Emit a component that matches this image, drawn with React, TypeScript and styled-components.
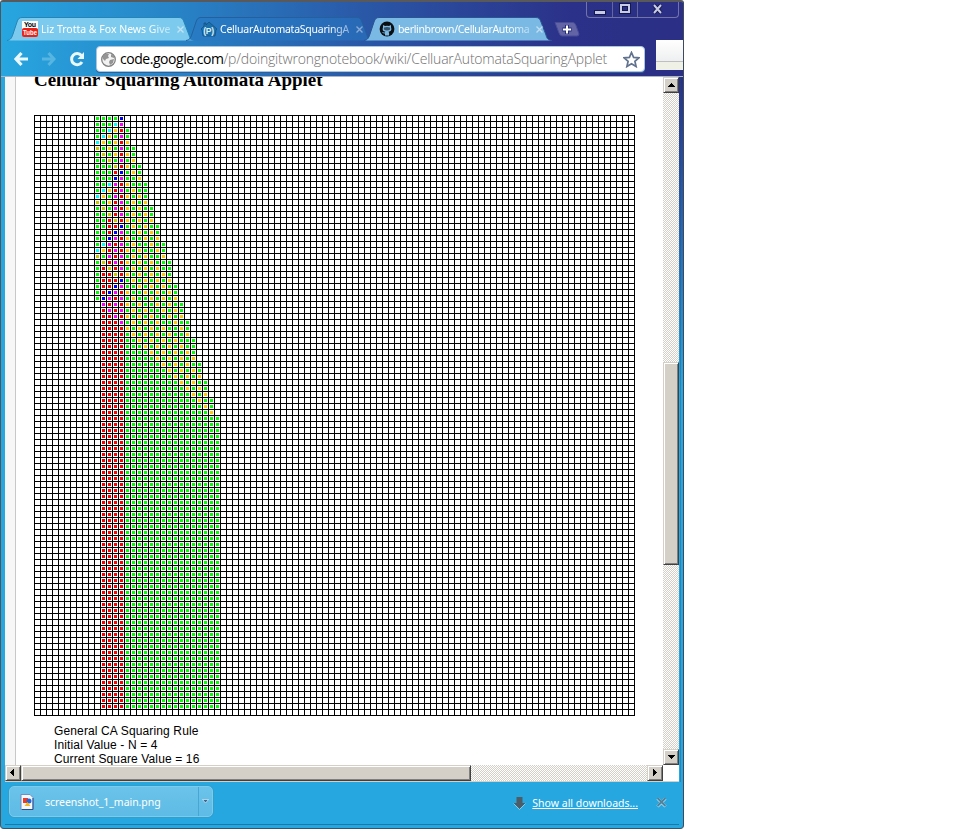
import React from "react";
import styled, { createGlobalStyle } from "styled-components";

const Global = createGlobalStyle`
  * { box-sizing: border-box; }
  body { margin: 0; background: #fff; overflow: hidden; }
`;

const ui = `"Noto Sans", "Open Sans", sans-serif`;

const Window = styled.div`
  position: relative;
  width: 684px;
  height: 829px;
  display: flex;
  flex-direction: column;
  overflow: hidden;
  background: #27a7df;
  border-top: 2px solid #59595b;
  border-left: 1px solid #4c565c;
  border-right: 1px solid #3c4a5c;
  border-bottom: 1px solid #34566a;
  border-radius: 3px 3px 4px 4px;
`;

const Header = styled.header`
  height: 75px;
  flex: none;
  background: linear-gradient(90deg, #27a6df 0, #2880c4 190px, #2a56a6 370px, #2b3188 570px, #2b2f86 100%);
  box-shadow: inset 0 -1px 0 #a9b6c8;
`;

const TitleBar = styled.div`
  display: flex;
  align-items: flex-end;
  height: 39px;
  padding-left: 6px;
`;

const Tab = styled.div<{ $w: number }>`
  position: relative;
  width: ${(p) => p.$w}px;
  height: 24px;
  margin-right: -9px;
  display: flex;
  align-items: center;
  padding: 0 11px 0 15px;
`;

const TabShape = styled.svg`
  position: absolute;
  inset: 0;
`;

const TabIcon = styled.svg`
  position: relative;
  flex: none;
  width: 16px;
  height: 16px;
`;

const TabLabel = styled.span<{ $spacing: number }>`
  position: relative;
  flex: 1;
  margin-left: 3px;
  white-space: nowrap;
  font: 10.5px/16px ${ui};
  letter-spacing: ${(p) => p.$spacing}px;
  color: #fff;
  mask-image: linear-gradient(90deg, #000 calc(100% - 20px), rgba(0, 0, 0, 0.45));
`;

const TabClose = styled.svg`
  position: relative;
  flex: none;
  width: 7px;
  height: 7px;
  margin-left: 7px;
`;

const NewTab = styled.svg`
  width: 26px;
  height: 15px;
  margin: 0 0 4px 11px;
  flex: none;
`;

const Controls = styled.div`
  position: absolute;
  top: -1px;
  right: 4px;
  display: flex;
  width: 93px;
  height: 17px;
  border: 1px solid #7273a8;
  border-top: 0;
  border-radius: 0 0 4px 4px;
`;

const Control = styled.div<{ $w: number }>`
  width: ${(p) => p.$w}px;
  display: flex;
  align-items: center;
  justify-content: center;
  & + & { border-left: 1px solid #6466a0; }
`;

const Toolbar = styled.div`
  display: flex;
  align-items: center;
  height: 36px;
  padding: 0 0 0 12px;
`;

const NavIcon = styled.svg`
  width: 16px;
  height: 16px;
  margin-right: 12px;
  flex: none;
`;

const AddressBar = styled.div`
  display: flex;
  align-items: center;
  width: 549px;
  height: 26px;
  margin-left: -1px;
  padding: 0 4px 0 4px;
  background: #fff;
  border: 1px solid #a8c6df;
  border-radius: 4px;
  box-shadow: 0 1px 0 #2c5f9b;
  svg { flex: none; }
`;

const Url = styled.div`
  flex: 1;
  margin-left: 4px;
  white-space: nowrap;
  font: 300 14px/20px "Open Sans", ${ui};
  color: #707070;
  letter-spacing: -0.2px;
`;

const Host = styled.span`
  color: #000;
  font-weight: 400;
  letter-spacing: -0.46px;
`;

const Notch = styled.div`
  position: absolute;
  top: 38px;
  right: -1px;
  width: 28px;
  height: 30px;
  background: linear-gradient(#fff 0, #eeeff0 21px, #bfbfbf 21px, #bfbfbf 22px, #f0f1e6 22px);
`;

const Body = styled.div`
  display: flex;
  height: 705px;
  flex: none;
  padding-left: 4px;
`;

const View = styled.div`
  width: 674px;
  display: grid;
  grid-template: 688px 17px / 658px 16px;
  background: #fff;
`;

const FrameEdge = styled.div`
  width: 4px;
  background: linear-gradient(90deg, transparent 1px, rgba(20, 80, 130, 0.35) 1px, rgba(20, 80, 130, 0.35) 2px, transparent 2px),
    linear-gradient(#2b2f86 0, #2a62ae 140px, #27a6df 310px);
`;

const Page = styled.main`
  overflow: hidden;
  border-left: 10px solid #f7f7f7;
`;

const Article = styled.article`
  display: flow-root;
  height: 688px;
  border-left: 1px solid #c8c8c8;
  padding-left: 18px;
`;

const Heading = styled.h2`
  margin: -8px 0 24px;
  height: 22px;
  font: bold 19px/22px "Liberation Serif", serif;
  letter-spacing: -0.03px;
  color: #000;
`;

const Grid = styled.svg`
  display: block;
`;

const Notes = styled.div`
  margin: 8px 0 0 20px;
  font: 12px/14px "Liberation Sans", sans-serif;
  letter-spacing: 0.13px;
  color: #000;
`;

const checker = `repeating-conic-gradient(#d4d0c8 0 25%, #fff 0 50%) 0 0 / 2px 2px`;

const VScroll = styled.div`
  display: flex;
  flex-direction: column;
  background: ${checker};
`;

const HScroll = styled.div`
  display: flex;
  background: ${checker};
  border-bottom: 1px solid #d4d0c8;
`;

const Corner = styled.div`
  background: #fff;
  border-bottom: 1px solid #d4d0c8;
`;

const ScrollPart = styled.div<{ $w: number; $h: number }>`
  width: ${(p) => p.$w}px;
  height: ${(p) => p.$h}px;
  flex: none;
  display: flex;
  align-items: center;
  justify-content: center;
  background: #d4d0c8;
  border: 1px solid;
  border-color: #d4d0c8 #404040 #404040 #d4d0c8;
  box-shadow: inset 1px 1px 0 #fff, inset -1px -1px 0 #808080;
`;

const Gap = styled.div<{ $size: number }>`
  flex: 0 0 ${(p) => p.$size}px;
`;

const Shelf = styled.footer`
  display: flex;
  height: 43px;
  margin: 0 4px;
  padding: 4px 0 0 4px;
  border-bottom: 1px solid #1979a7;
`;

const Download = styled.div`
  display: flex;
  align-items: center;
  width: 204px;
  height: 31px;
  padding-left: 9px;
  background: linear-gradient(#6ac3ea, #5ebbe5);
  border: 1px solid #7ccbed;
  border-radius: 5px;
  box-shadow: 0 0 0 1px #319fcc;
`;

const FileName = styled.span`
  flex: 1;
  margin-left: 10px;
  font: 10.5px/16px ${ui};
  letter-spacing: -0.05px;
  color: #fff;
`;

const DownloadMenu = styled.div`
  width: 14px;
  height: 29px;
  display: flex;
  align-items: center;
  justify-content: center;
  border-left: 1px solid #45a7d2;
`;

const ShelfActions = styled.div`
  display: flex;
  align-items: center;
  height: 33px;
  margin-left: auto;
  padding-right: 12px;
`;

const AllDownloads = styled.a`
  margin: 0 18px 0 6px;
  font: 10.5px/16px ${ui};
  letter-spacing: 0;
  color: #fff;
  text-decoration: underline;
  white-space: nowrap;
`;

/* One step of the squaring automaton: (left, centre, right) -> next state. */
function next(l: number, c: number, r: number): number {
  if (l === 0 && r === 3) return 0;
  if (c === 2 && r === 3) return 3;
  if (l === 1 && c === 1 && r === 3) return 4;
  if (c === 1 && r === 4) return 4;
  if ((l === 1 || l === 2) && c === 3) return 5;
  if ((l === 0 || l === 1) && c === 4) return 7 - l;
  if (l === 7 && c === 2 && r === 6) return 3;
  if (l === 7) return 7;
  if (c === 7 && (r === 1 || r === 2)) return r;
  if (c === 5 || c === 6) return 7 - c;
  if ((l === 5 || l === 6) && (c === 1 || c === 2)) return 7 - c;
  if ((l === 5 || l === 6) && c === 0 && r === 0) return 1;
  if (c === 1 || c === 2) return c;
  return 0;
}

const SIZE = 100;
const FIRST = 10;
const STATE_COLORS = ["", "#00ff00", "#ff0000", "#0000ff", "#00ffff", "#ff00ff", "#ffc800", "#c8c800"];

function evolve(steps: number): number[][] {
  let row: number[] = new Array(SIZE).fill(0);
  [1, 1, 1, 1, 3].forEach((v, i) => (row[FIRST + i] = v));
  const rows = [row];
  while (rows.length < steps) {
    const prev = row;
    row = prev.map((c, i) => next(prev[i - 1] ?? 0, c, prev[i + 1] ?? 0));
    rows.push(row);
  }
  return rows;
}

const ROWS = evolve(99);
const LINES = Array.from({ length: SIZE + 1 }, (_, i) => `M${i * 6 + 0.5} 0V601M0 ${i * 6 + 0.5}H601`).join("");

function Automaton() {
  return (
    <Grid width={601} height={601} shapeRendering="crispEdges">
      <path d={LINES} stroke="#000" fill="none" />
      {ROWS.map((row, y) =>
        row.map((s, x) =>
          s ? <rect key={`${x}-${y}`} x={x * 6 + 2} y={y * 6 + 2} width={3} height={3} fill={STATE_COLORS[s]} /> : null
        )
      )}
    </Grid>
  );
}

function BrowserTab({ w, fill, edge, label, spacing, cross, children }: {
  w: number; fill: string; edge: string; label: string; spacing: number; cross: string; children: React.ReactNode;
}) {
  return (
    <Tab $w={w}>
      <TabShape width={w} height={24}>
        <path
          d={`M0 23.5C4 23 5 20 6 17L10 5C11 2 12 .5 15 .5H${w - 16}C${w - 13} .5 ${w - 12} 2 ${w - 11} 5L${w - 6} 18C${w - 5} 22 ${w - 4} 23 ${w} 23.5`}
          fill={fill}
          stroke={edge}
        />
      </TabShape>
      <TabIcon viewBox="0 0 16 16">{children}</TabIcon>
      <TabLabel $spacing={spacing}>{label}</TabLabel>
      <TabClose viewBox="0 0 7 7"><path d="M.5.5l6 6M6.5.5l-6 6" stroke={cross} strokeWidth="1.4" /></TabClose>
    </Tab>
  );
}

function Arrow({ d }: { d: string }) {
  return <svg width={8} height={8} shapeRendering="crispEdges"><path d={d} fill="#000" /></svg>;
}

export default function App() {
  return (
    <>
      <Global />
      <Window>
        <Header>
          <TitleBar>
            <BrowserTab w={188} fill="#7ccbee" edge="#2685b8" label="Liz Trotta & Fox News Give" spacing={0} cross="#c0e3f5">
              <path d="M0 0h16v8H0z" fill="#fff" />
              <rect y="7" width="16" height="9" rx="2" fill="#ec2015" />
              <text x="2" y="6.3" fontFamily="Liberation Sans, sans-serif" fontWeight="bold" fontSize="7" textLength="12">You</text>
              <text x="1" y="14" fontFamily="Liberation Sans, sans-serif" fontWeight="bold" fontSize="7" fill="#fff" textLength="14" lengthAdjust="spacingAndGlyphs">Tube</text>
            </BrowserTab>
            <BrowserTab w={187} fill="rgba(40,120,195,.55)" edge="#23609d" label="CelluarAutomataSquaringA" spacing={-0.24} cross="#86a9d6">
              <path d="M0 8L3 5V2h2v2l3-3 8 7-1 1-1 6H2L1 9z" fill="#1c70aa" stroke="#134c7c" strokeWidth=".7" />
              <text x="2.2" y="12.5" fontFamily="Liberation Sans, sans-serif" fontWeight="bold" fontSize="8.5" fill="#d8effc" textLength="11">(P)</text>
            </BrowserTab>
            <BrowserTab w={188} fill="#79b9e3" edge="#2a5593" label="berlinbrown/CellularAutoma" spacing={-0.35} cross="#bfdcf0">
              <circle cx="8" cy="8" r="7.4" fill="#0b0f12" />
              <path d="M4 4l2 1.1q2-.5 4 0L12 4v2.2c1 3-.3 4.2-2.5 4.5.8 1 .7 2 .6 3.7H6v-2c-2 .5-2-.7-3-1.4 1.2-.2 1.4 1 3 .5 0-.5.1-.6.5-.8C4 10.300 3 9 4 6.200z" fill="#79b9e3" />
              <path d="M5 6.500q3-1 6 0 1 3-3 3t-3-3" fill="#38536a" />
            </BrowserTab>
            <NewTab viewBox="0 0 26 15">
              <path d="M1 .5H19q2 0 3 3L25 12q0 2-2 2H8q-2 0-3-3z" fill="#6264a5" stroke="#494d99" />
              <path d="M13 3v9M8.500 7.500h9" stroke="#252b75" strokeWidth="4" />
              <path d="M13 3.500v8M9 7.500h8" stroke="#fff" strokeWidth="2" />
            </NewTab>
          </TitleBar>
          <Toolbar>
            <NavIcon viewBox="0 0 16 16">
              <path d="M8.500 2L3 8l5.500 6M3.500 8H15" stroke="#e9f7fe" strokeWidth="3.200" fill="none" />
            </NavIcon>
            <NavIcon viewBox="0 0 16 16">
              <path d="M7.500 2L13 8l-5.500 6M12.500 8H1" stroke="#57b5e2" strokeWidth="3" fill="none" />
            </NavIcon>
            <NavIcon viewBox="0 0 16 16">
              <path d="M12.500 4.500A5.600 5.600 0 1 0 13 11" stroke="#e9f7fe" strokeWidth="3" fill="none" />
              <path d="M15 1v7H8.500z" fill="#e9f7fe" />
            </NavIcon>
            <AddressBar>
              <svg width={15} height={15} viewBox="0 0 15 15">
                <circle cx="7.500" cy="7.500" r="6.800" fill="#f2f2f2" stroke="#808080" strokeWidth="1.300" />
                <path d="M2 4l3-2.500 3 .5-1 2 1 2-3 1-1 2-2-2zM9 8l4-1-1 4-3 2-1-3zM10 2l3 2v2l-3-1z" fill="#949494" />
              </svg>
              <Url><Host>code.google.com</Host>/p/doingitwrongnotebook/wiki/CelluarAutomataSquaringApplet</Url>
              <svg width={17} height={17} viewBox="0 0 17 17">
                <path d="M8.500 1.500l2.100 4.900 5.300.4-4 3.500 1.200 5.200-4.600-2.800-4.600 2.800 1.200-5.200-4-3.500 5.300-.4z" fill="#fff" stroke="#62738f" strokeWidth="1.700" />
              </svg>
            </AddressBar>
          </Toolbar>
        </Header>
        <Body>
          <View>
            <Page>
              <Article>
                <Heading>Cellular Squaring Automata Applet</Heading>
                <Automaton />
                <Notes>
                  <div>General CA Squaring Rule</div>
                  <div>Initial Value - N = 4</div>
                  <div>Current Square Value = 16</div>
                </Notes>
              </Article>
            </Page>
            <VScroll>
              <ScrollPart $w={16} $h={16}><Arrow d="M4 2h1v1h1v1h1v1h1v1H1V5h1V4h1V3h1z" /></ScrollPart>
              <Gap $size={269} />
              <ScrollPart $w={16} $h={203} />
              <Gap $size={184} />
              <ScrollPart $w={16} $h={16}><Arrow d="M1 2h7v1H7v1H6v1H5v1H4V5H3V4H2V3H1z" /></ScrollPart>
            </VScroll>
            <HScroll>
              <ScrollPart $w={16} $h={16}><Arrow d="M5 0v7H4V6H3V5H2V4H1V3h1V2h1V1h1V0z" /></ScrollPart>
              <ScrollPart $w={450} $h={16} />
              <Gap $size={176} />
              <ScrollPart $w={16} $h={16}><Arrow d="M2 0h1v1h1v1h1v1h1v1H5v1H4v1H3v1H2z" /></ScrollPart>
            </HScroll>
            <Corner />
          </View>
          <FrameEdge />
        </Body>
        <Shelf>
          <Download>
            <svg width={16} height={16} viewBox="0 0 16 16">
              <path d="M2 .5h9l3 3v12H2z" fill="#f4f8ff" stroke="#6e8fc0" />
              <path d="M14 4v11.500H3" stroke="#2c4d8c" fill="none" />
              <path d="M4 4h5v5H4z" fill="#ee3b23" />
              <circle cx="10" cy="7" r="2.500" fill="#2368da" />
              <path d="M5.500 12l3-4 3 4z" fill="#f6b71b" />
            </svg>
            <FileName>screenshot_1_main.png</FileName>
            <DownloadMenu>
              <svg width={7} height={5}><path d="M.5.5h6L3.500 4z" fill="#3f668f" stroke="#d7effa" strokeWidth=".7" /></svg>
            </DownloadMenu>
          </Download>
          <ShelfActions>
            <svg width={13} height={14} viewBox="0 0 13 14">
              <path d="M3.500 1h6v6h3l-6 6-6-6h3z" fill="#4d5d68" />
              <path d="M.5 7.500l6 6 6-6" stroke="#85cbea" fill="none" />
            </svg>
            <AllDownloads>Show all downloads...</AllDownloads>
            <svg width={11} height={11}>
              <path d="M1.500 1.500l8 8M9.500 1.500l-8 8" stroke="#a3d9f0" strokeWidth="3" />
              <path d="M1.500 1l8 8M9.500 1l-8 8" stroke="#4f819b" strokeWidth="1.800" />
            </svg>
          </ShelfActions>
        </Shelf>
        <Controls>
          <Control $w={25}><svg width={12} height={12}><rect x=".5" y="7.500" width="11" height="4" fill="#c8cbe4" stroke="#15194f" /></svg></Control>
          <Control $w={25}><svg width={12} height={12}><rect x="2" y="2" width="8" height="7" fill="none" stroke="#15194f" strokeWidth="4" /><rect x="2" y="2" width="8" height="7" fill="none" stroke="#c8cbe4" strokeWidth="2" /></svg></Control>
          <Control $w={41}><svg width={12} height={12}><path d="M2 2l7 8M9 2l-7 8" stroke="#15194f" strokeWidth="4" /><path d="M2 2l7 8M9 2l-7 8" stroke="#c8cbe4" strokeWidth="2" /></svg></Control>
        </Controls>
        <Notch />
      </Window>
    </>
  );
}
